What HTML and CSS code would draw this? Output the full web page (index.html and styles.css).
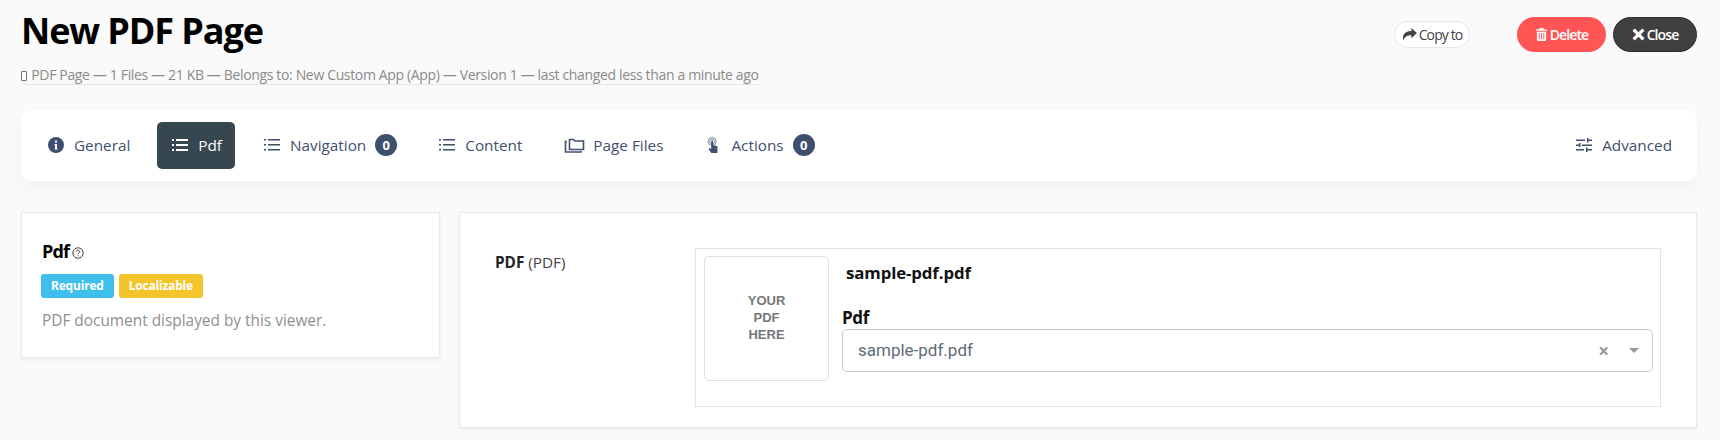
FILE: index.html
```html
<!DOCTYPE html>
<html lang="en">
<head>
  <meta charset="UTF-8">
  <title>New PDF Page</title>
  <link rel="stylesheet" href="styles.css">
</head>
<body>
  <header class="page-head">
    <div class="head-text">
      <h1>New PDF Page</h1>
      <p class="meta"><span class="meta-icon"></span> PDF Page — 1 Files — 21 KB — Belongs to: New Custom App (App) — Version 1 — last changed less than a minute ago</p>
    </div>
    <div class="head-actions">
      <a class="btn btn-copy">
        <svg class="btn-icon" viewBox="0 0 16 14"><path d="M10 0l6 5.500-6 5.500V7.700C6 7.700 3 8.500 1.600 13.500 0 9 1.500 3.400 10 3.200z"/></svg>Copy to
      </a>
      <a class="btn btn-delete">
        <svg class="btn-icon" viewBox="0 0 12 14"><path d="M4 0h4l1 1.500h3V3H0V1.500h3zM1 4h10v8.500q0 1.500-1.500 1.500h-7Q1 14 1 12.500zm2 1.500V12.500h1V5.500zm2.500 0V12.500h1V5.500zm2.500 0V12.500h1V5.500z" fill-rule="evenodd"/></svg>Delete
      </a>
      <a class="btn btn-close">
        <svg class="btn-icon" viewBox="0 0 12 12"><path class="line" d="M1.500 1.500l9 9M10.500 1.500l-9 9" stroke-width="3"/></svg>Close
      </a>
    </div>
  </header>

  <nav class="tabs">
    <a class="tab">
      <svg class="tab-icon" viewBox="0 0 16 16"><path fill-rule="evenodd" d="M8 0a8 8 0 1 1 0 16A8 8 0 0 1 8 0zM7 3.500v2h2v-2zM6.500 7v1H7v3.500H6.500v1h3v-1H9V7z"/></svg>General
    </a>
    <a class="tab active">
      <svg class="tab-icon" viewBox="0 0 16 14"><path d="M0 1h2v2H0zM4 1h12v2H4zM0 6h2v2H0zM4 6h12v2H4zM0 11h2v2H0zM4 11h12v2H4z"/></svg>Pdf
    </a>
    <a class="tab">
      <svg class="tab-icon" viewBox="0 0 16 14"><path d="M0 1h2v1.500H0zM4 1h12v1.500H4zM0 6h2v1.500H0zM4 6h12v1.500H4zM0 11h2v1.500H0zM4 11h12v1.500H4z"/></svg>Navigation<span class="count">0</span>
    </a>
    <a class="tab">
      <svg class="tab-icon" viewBox="0 0 16 14"><path d="M0 1h2v1.500H0zM4 1h12v1.500H4zM0 6h2v1.500H0zM4 6h12v1.500H4zM0 11h2v1.500H0zM4 11h12v1.500H4z"/></svg>Content
    </a>
    <a class="tab">
      <svg class="tab-icon icon-wide" viewBox="0 0 20 16"><path class="line" stroke-width="1.600" d="M5 12.500V2.500h4l1.500 1.500h8.500v8.500z"/><path class="line" stroke-width="1.600" d="M2.500 4.500H1v10.500h15.500v-1"/></svg>Page Files
    </a>
    <a class="tab">
      <svg class="tab-icon" viewBox="0 0 14 18"><circle class="line" stroke-width=".7" cx="6" cy="5" r="4.500"/><circle class="line" stroke-width=".7" cx="6" cy="5" r="2.800"/><path d="M5 4.500q1-1.500 2 0V9l5 1.500V18H5L2 13.500l1-1 2 1z"/></svg>Actions<span class="count">0</span>
    </a>
    <a class="tab tab-end">
      <svg class="tab-icon" viewBox="0 0 16 14"><path d="M0 1.500h9v1.500H0zM11 0h1.500v1.500H16V3h-3.500v1.500H11zM0 6.500h3V5h1.500v4H3V8H0zM6 6.500h10V8H6zM0 11h8v1.500H0zM10 9.500h1.500V11H16v1.500h-4.500V14H10z"/></svg>Advanced
    </a>
  </nav>

  <main class="content">
    <section class="card side-card">
      <h2>Pdf <svg class="help" viewBox="0 0 12 12"><circle class="line" cx="6" cy="6" r="5.200"/><path class="line" d="M4.300 4.800C4.300 2.700 7.800 2.800 7.800 4.700 7.800 6 6 5.800 6 7.200"/><path d="M5.500 8.200h1v1h-1z"/></svg></h2>
      <div class="badges">
        <span class="badge badge-blue">Required</span>
        <span class="badge badge-yellow">Localizable</span>
      </div>
      <p class="desc">PDF document displayed by this viewer.</p>
    </section>

    <section class="card main-card">
      <div class="field-label"><strong>PDF</strong> (PDF)</div>
      <div class="field-box">
        <div class="preview">YOUR<br>PDF<br>HERE</div>
        <div class="file-side">
          <div class="file-name">sample-pdf.pdf</div>
          <label class="select-label">Pdf</label>
          <div class="select">
            <span class="select-value">sample-pdf.pdf</span>
            <span class="select-clear">×</span>
            <span class="select-arrow"></span>
          </div>
        </div>
      </div>
    </section>
  </main>
</body>
</html>
```

FILE: styles.css
```css
* {
  box-sizing: border-box;
}
html, body {
  height: 440px;
  overflow: hidden;
}
body {
  margin: 0;
  padding: 0 23px 0 21px;
  font-family: 'Open Sans', 'Noto Sans', sans-serif;
  background: #fafafa;
  color: #3b4a63;
}
.page-head {
  display: flex;
  justify-content: space-between;
  height: 110px;
}
h1 {
  margin: 8px 0 0;
  font-size: 36px;
  line-height: 46px;
  font-weight: 700;
  letter-spacing: -1.1px;
  color: #000;
}
.meta {
  display: inline-block;
  margin: 12px 0 0;
  font-size: 14px;
  line-height: 18px;
  letter-spacing: -0.35px;
  color: #8a8a8a;
  border-bottom: 1px solid #e6e6e6;
}
.meta-icon {
  display: inline-block;
  width: 6px;
  height: 10px;
  margin-right: 1px;
  vertical-align: -1px;
  border: 1px solid #777;
  border-radius: 1px;
}
.line {
  fill: none;
  stroke: currentColor;
}
.head-actions {
  display: flex;
  align-items: flex-start;
  padding-top: 17px;
}
.btn {
  display: flex;
  align-items: center;
  justify-content: center;
  font-size: 14px;
  letter-spacing: -0.9px;
  font-weight: 600;
  border-radius: 18px;
}
.btn-icon {
  width: 13px;
  height: 13px;
  margin-right: 2px;
  fill: currentColor;
}
.btn-copy {
  width: 76px;
  height: 27px;
  margin-top: 4px;
  margin-right: 47px;
  background: #fff;
  border: 1px solid #e8e8e8;
  color: #444;
  font-weight: 400;
}
.btn-copy .btn-icon {
  width: 15px;
}
.btn-delete {
  width: 89px;
  height: 35px;
  margin-right: 7px;
  background: #ff5555;
  color: #fff;
}
.btn-close {
  width: 84px;
  height: 35px;
  background: #404040;
  border: 1px solid #2c2c2c;
  color: #fff;
}
.tabs {
  display: flex;
  align-items: center;
  height: 71px;
  padding: 0 12px 0 14px;
  background: #fff;
  border-radius: 10px;
  box-shadow: 0 6px 16px rgba(0,0,0,0.04);
}
.tab {
  display: flex;
  align-items: center;
  height: 47px;
  margin-right: 16px;
  padding: 0 13px 2px;
  font-size: 15.3px;
  color: #3f4f6e;
  border-radius: 5px;
}
.tab:first-child {
  margin-right: 14px;
}
.tab.active {
  padding-left: 15px;
  background: #37474f;
  color: #fff;
}
.tab-end {
  margin-left: auto;
  margin-right: 0;
}
.tab-icon {
  width: 16px;
  height: 16px;
  margin-right: 10px;
  fill: currentColor;
}
.icon-wide {
  width: 21px;
  margin-right: 8px;
}
.count {
  display: flex;
  align-items: center;
  justify-content: center;
  width: 22px;
  height: 22px;
  margin-left: 9px;
  border-radius: 50%;
  background: #3f4f6e;
  color: #fff;
  font-size: 13px;
  font-weight: 700;
}
.content {
  display: flex;
  align-items: flex-start;
  gap: 19px;
  margin-top: 31px;
}
.card {
  background: #fff;
  border: 1px solid #e8e8e8;
  box-shadow: 0 2px 3px rgba(0,0,0,0.05);
}
.side-card {
  flex: none;
  width: 419px;
  height: 146px;
  padding: 25px 20px 0 20px;
}
h2 {
  margin: 0;
  display: flex;
  align-items: center;
  gap: 3px;
  font-size: 18px;
  line-height: 26px;
  letter-spacing: -0.9px;
  font-weight: 700;
  color: #000;
}
.help {
  width: 12px;
  height: 12px;
  margin-top: 3px;
  fill: #444;
  color: #444;
}
.badges {
  display: flex;
  gap: 5px;
  margin: 10px 0 0 -1px;
}
.badge {
  height: 24px;
  padding: 0 10px;
  font-size: 12px;
  font-weight: 700;
  line-height: 24px;
  letter-spacing: -0.2px;
  color: #fff;
  border-radius: 3px;
}
.badge-blue {
  background: #3fbfeb;
}
.badge-yellow {
  background: #f4c42b;
}
.desc {
  margin: 13px 0 0;
  font-size: 15.4px;
  line-height: 20px;
  color: #8f8f8f;
}
.main-card {
  display: flex;
  flex: 1;
  height: 216px;
  padding: 35px 35px 0 35px;
}
.field-label {
  width: 200px;
  padding-top: 4px;
  font-size: 15.3px;
  line-height: 20px;
  color: #444;
}
.field-label strong {
  color: #222;
}
.field-box {
  display: flex;
  flex: 1;
  height: 159px;
  padding: 7px 7px 7px 8px;
  background: #fff;
  border: 1px solid #e4e4e4;
}
.preview {
  display: flex;
  flex: none;
  align-items: center;
  justify-content: center;
  width: 125px;
  height: 125px;
  padding-bottom: 2px;
  font-family: 'Liberation Sans', sans-serif;
  font-size: 13px;
  line-height: 17px;
  font-weight: 700;
  text-align: center;
  color: #777;
  border: 1px solid #e0e0e0;
  border-radius: 5px;
}
.file-side {
  flex: 1;
  padding-left: 13px;
}
.file-name {
  margin-top: 7px;
  padding-left: 4px;
  font-size: 16.8px;
  line-height: 20px;
  font-weight: 700;
  letter-spacing: -0.1px;
  color: #111;
}
.select-label {
  display: block;
  margin-top: 24px;
  font-size: 17px;
  line-height: 22px;
  font-weight: 700;
  letter-spacing: -0.4px;
  color: #111;
}
.select {
  display: flex;
  align-items: center;
  height: 43px;
  padding: 0 13px 0 15px;
  border: 1px solid #c8c8c8;
  border-radius: 5px;
}
.select-value {
  flex: 1;
  padding-bottom: 2px;
  font-family: 'Roboto', sans-serif;
  font-size: 17px;
  color: #5f6a77;
}
.select-clear {
  margin-right: 20px;
  font-size: 19px;
  font-weight: 700;
  color: #999;
}
.select-arrow {
  width: 0;
  height: 0;
  border-left: 5px solid transparent;
  border-right: 5px solid transparent;
  border-top: 5px solid #999;
}
```
